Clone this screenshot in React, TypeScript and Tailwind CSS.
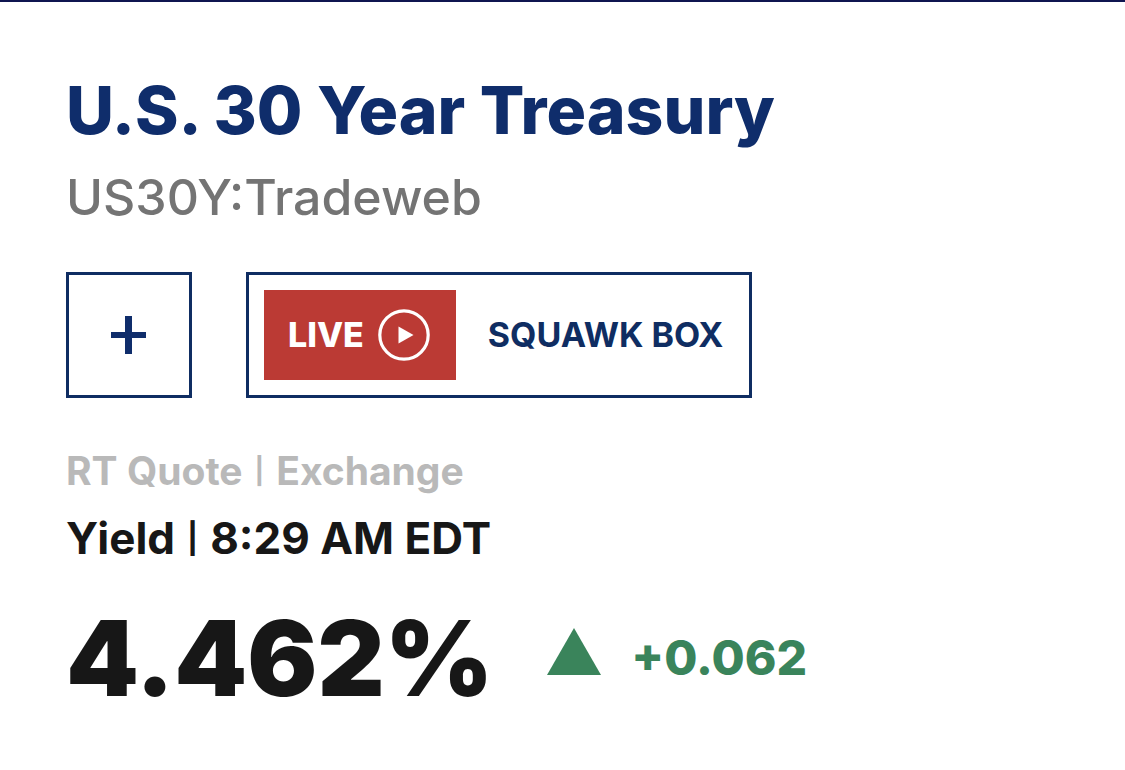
const quote = {
  name: 'U.S. 30 Year Treasury',
  symbol: 'US30Y',
  exchange: 'Tradeweb',
  time: '8:29 AM EDT',
  yield: '4.462%',
  change: '+0.062',
}

function PlusIcon() {
  return (
    <svg viewBox="0 0 36 38" className="h-[38px] w-9" fill="currentColor" aria-hidden="true">
      <path d="M14 0h7v16h14v6H21v16h-7V22H0v-6h14z" />
    </svg>
  )
}

function PlayIcon() {
  return (
    <svg viewBox="0 0 52 52" className="size-[52px] shrink-0" aria-hidden="true">
      <circle cx="26" cy="26" r="24.2" fill="none" stroke="currentColor" strokeWidth="3.2" />
      <path d="M20.5 17.5v17L35.5 26z" fill="currentColor" />
    </svg>
  )
}

function UpArrow() {
  return (
    <svg viewBox="0 0 54 47" className="h-[47px] w-[54px] shrink-0" fill="currentColor" aria-hidden="true">
      <path d="M27 0l27 47H0z" />
    </svg>
  )
}

export default function App() {
  return (
    <main className="border-t-2 border-[#0f1550] bg-white px-[66px] pt-[68px] pb-14 font-[Inter,sans-serif] text-[#171717]">
      <header>
        <h1 className="text-[66px] leading-[80px] font-extrabold text-[#0f2d6b]">{quote.name}</h1>
        <p className="mt-2 text-[50px] leading-[78px] font-medium text-[#747474]">
          {quote.symbol}:{quote.exchange}
        </p>
      </header>

      <div className="mt-9 flex flex-wrap gap-[54px]">
        <button
          type="button"
          aria-label="Add to watchlist"
          className="flex size-[126px] items-center justify-center border-3 border-[#0f2d62] text-[#0f2d6b]"
        >
          <PlusIcon />
        </button>
        <button
          type="button"
          className="flex h-[126px] items-center gap-8 border-3 border-[#0f2d62] pr-[26px] pl-[15px] text-[34px] leading-10 font-bold text-[#0f2d62]"
        >
          <span className="flex h-[90px] items-center gap-[14px] bg-[#bb3a34] pr-[26px] pl-6 font-extrabold text-white">
            LIVE
            <PlayIcon />
          </span>
          SQUAWK BOX
        </button>
      </div>

      <section>
        <p className="mt-12 flex items-center gap-3 text-[39px] leading-[50px] font-bold text-[#b9b9b9]">
          <span>RT Quote</span>
          <span className="text-[26px]">|</span>
          <span>Exchange</span>
        </p>
        <p className="mt-3 flex items-center gap-3 text-[44px] leading-[60px] font-bold">
          <span>Yield</span>
          <span className="text-[30px]">|</span>
          <span>{quote.time}</span>
        </p>
        <div className="mt-6 flex items-center gap-[54px]">
          <span className="text-[104px] leading-[132px] font-black">{quote.yield}</span>
          <span className="flex items-start gap-[30px] text-[48px] leading-[60px] font-extrabold text-[#3a845b]">
            <UpArrow />
            {quote.change}
          </span>
        </div>
      </section>
    </main>
  )
}
